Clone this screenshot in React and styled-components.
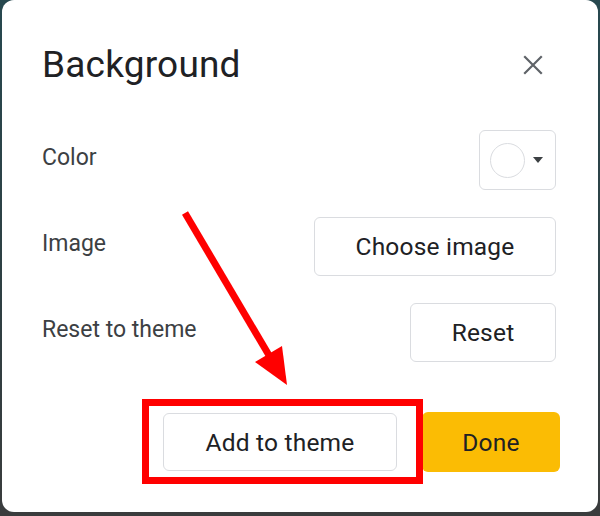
import React from 'react'
import styled, { createGlobalStyle } from 'styled-components'

const GlobalStyle = createGlobalStyle`
  html, body {
    margin: 0;
    padding: 0;
  }
  body {
    font-family: Roboto, "Noto Sans", "Liberation Sans", sans-serif;
    background: #2f4349;
  }
`

const font = `Roboto, "Noto Sans", "Liberation Sans", sans-serif`

function CloseIcon() {
  return (
    <svg width="20" height="20" viewBox="0 0 20 20">
      <path d="M2 2 L18 18 M18 2 L2 18" stroke="#5f6368" strokeWidth="2.2" strokeLinecap="square" />
    </svg>
  )
}

function Annotation() {
  return (
    <Overlay viewBox="0 0 600 516" width="600" height="516">
      <line x1="185" y1="213" x2="270" y2="357" stroke="#ff0000" strokeWidth="7" />
      <polygon points="287,385 255,362 282,346" fill="#ff0000" />
      <rect x="145.5" y="402.5" width="274" height="78" fill="none" stroke="#ff0000" strokeWidth="7" />
    </Overlay>
  )
}

export default function App() {
  return (
    <>
      <GlobalStyle />
      <Stage>
        <Dialog>
          <Header>
            <Title>Background</Title>
            <CloseButton aria-label="Close">
              <CloseIcon />
            </CloseButton>
          </Header>

          <Row>
            <Label>Color</Label>
            <SwatchButton>
              <Swatch />
              <Caret />
            </SwatchButton>
          </Row>
          <Row>
            <Label>Image</Label>
            <Button $width={242}>Choose image</Button>
          </Row>
          <Row>
            <Label>Reset to theme</Label>
            <Button $width={146}>Reset</Button>
          </Row>

          <Footer>
            <Button $width={234} $height={58}>Add to theme</Button>
            <PrimaryButton>Done</PrimaryButton>
          </Footer>
        </Dialog>
        <Annotation />
      </Stage>
    </>
  )
}

const Stage = styled.div`
  position: relative;
  width: 600px;
  height: 516px;
  box-sizing: border-box;
  padding: 0 2px 4px 2px;
  background: linear-gradient(180deg, #27484f 0%, #2f3f42 60%, #3a3c3d 100%);
  overflow: hidden;
`

const Dialog = styled.div`
  height: 512px;
  box-sizing: border-box;
  background: #ffffff;
  border-radius: 12px;
  padding: 0 42px 0 40px;
  display: flex;
  flex-direction: column;
`

const Header = styled.div`
  height: 117px;
  box-sizing: border-box;
  padding-top: 12px;
  display: flex;
  align-items: center;
  justify-content: space-between;
`

const Title = styled.h1`
  margin: 0;
  font-family: ${font};
  font-size: 37px;
  font-weight: 400;
  color: #202124;
  letter-spacing: 0.2px;
`

const CloseButton = styled.button`
  border: none;
  background: none;
  padding: 0;
  margin-right: 13px;
  width: 20px;
  height: 20px;
  display: flex;
  cursor: pointer;
`

const Row = styled.div`
  height: 86px;
  display: flex;
  align-items: center;
  justify-content: space-between;
`

const Label = styled.span`
  font-family: ${font};
  font-size: 23px;
  color: #3c4043;
  margin-top: -5px;
`

const Button = styled.button`
  width: ${p => p.$width}px;
  height: ${p => p.$height || 59}px;
  box-sizing: border-box;
  background: #ffffff;
  border: 1px solid #dadce0;
  border-radius: 6px;
  font-family: ${font};
  font-size: 24.5px;
  font-weight: 400;
  color: #202124;
  letter-spacing: 0.2px;
  cursor: pointer;
`

const SwatchButton = styled.button`
  width: 77px;
  height: 60px;
  box-sizing: border-box;
  background: #ffffff;
  border: 1px solid #dadce0;
  border-radius: 6px;
  display: flex;
  align-items: center;
  gap: 8px;
  padding: 0 0 0 10px;
  cursor: pointer;
`

const Swatch = styled.span`
  width: 35px;
  height: 35px;
  box-sizing: border-box;
  border-radius: 50%;
  border: 1px solid #dadce0;
  background: #ffffff;
`

const Caret = styled.span`
  width: 0;
  height: 0;
  border-left: 5px solid transparent;
  border-right: 5px solid transparent;
  border-top: 6px solid #3c4043;
`

const Footer = styled.div`
  margin-top: 37px;
  margin-right: -4px;
  display: flex;
  justify-content: flex-end;
  align-items: center;
  gap: 25px;
`

const PrimaryButton = styled.button`
  width: 138px;
  height: 60px;
  border: none;
  border-radius: 6px;
  background: #fbbc04;
  font-family: ${font};
  font-size: 24.5px;
  font-weight: 400;
  color: #202124;
  letter-spacing: 0.2px;
  cursor: pointer;
`

const Overlay = styled.svg`
  position: absolute;
  inset: 0;
  pointer-events: none;
`
